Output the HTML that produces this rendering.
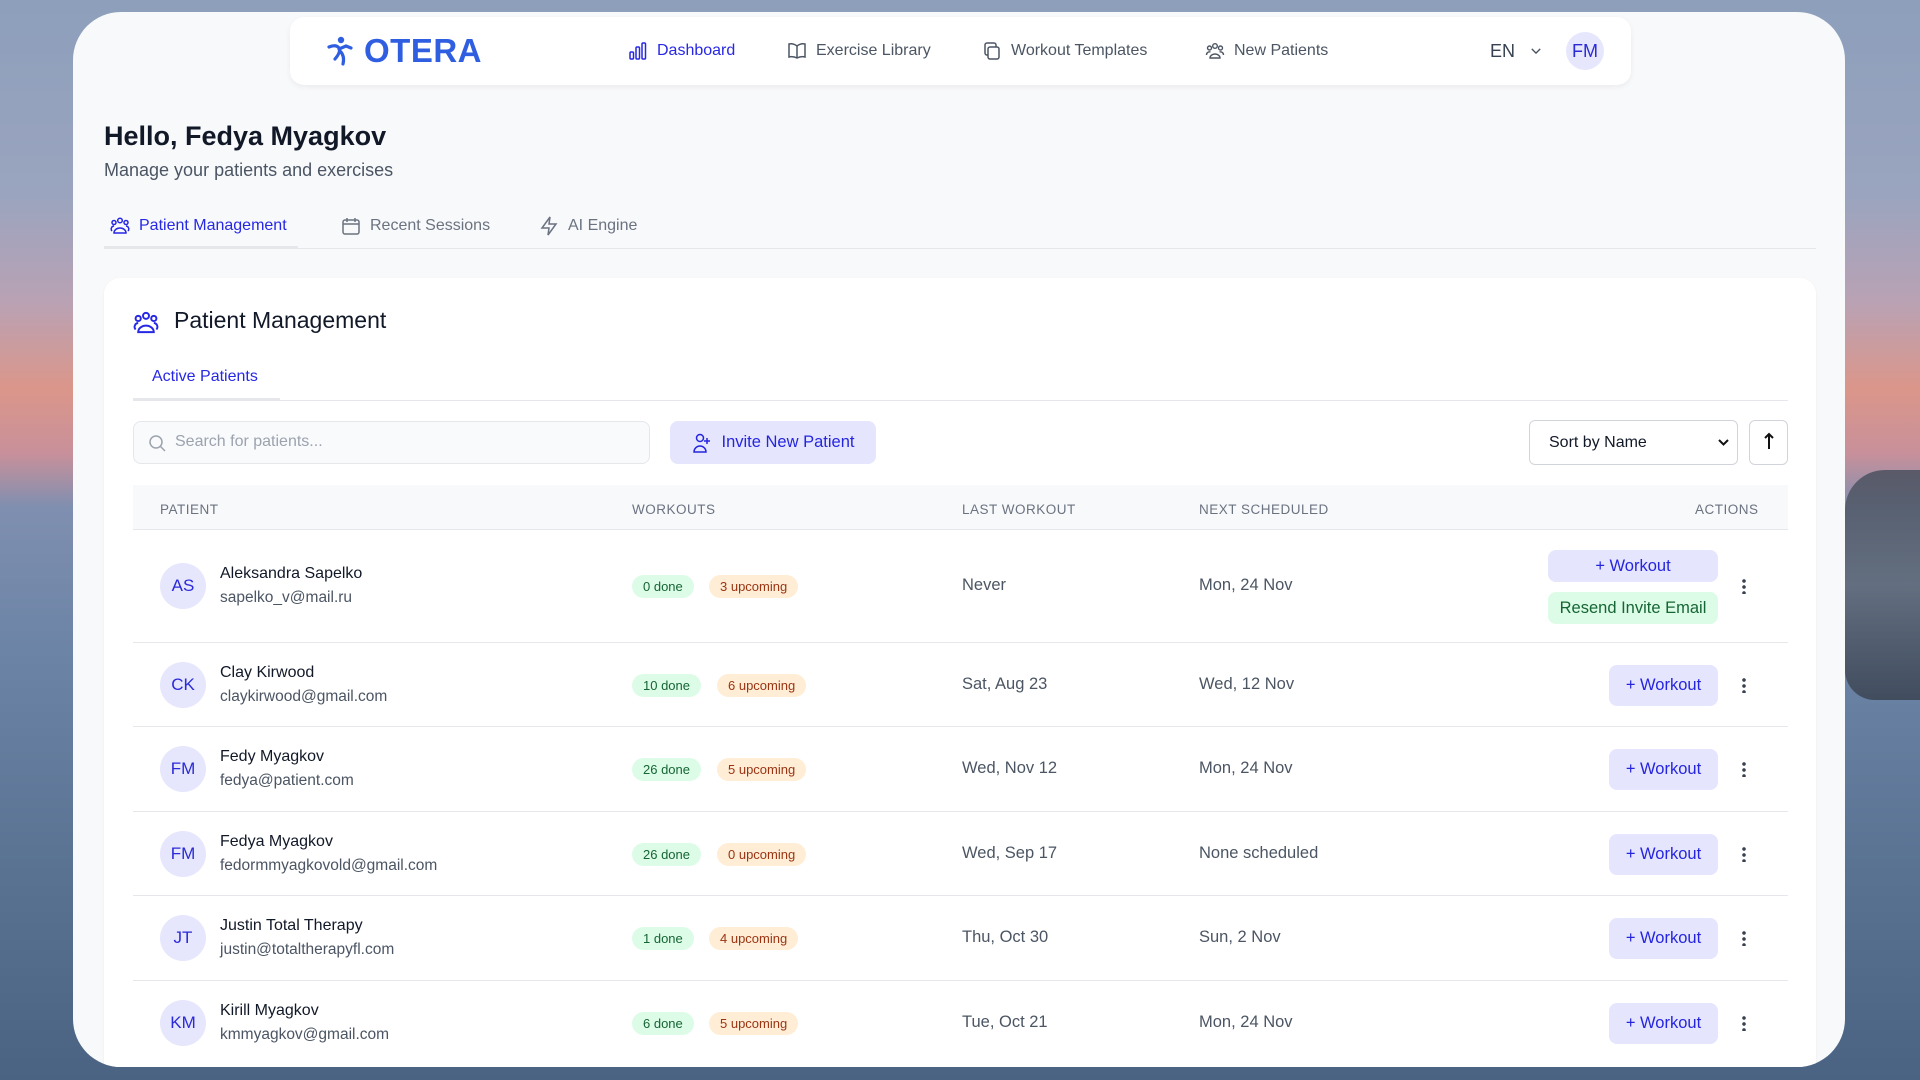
<!DOCTYPE html>
<html><head><meta charset="utf-8"><style>
*{box-sizing:border-box;margin:0;padding:0}
body{width:1920px;height:1080px;overflow:hidden;position:relative;font-family:"Liberation Sans",sans-serif;
background:linear-gradient(180deg,#8d9fbb 0%,#9aa4bf 18%,#b9a2b4 28%,#db968a 36%,#c8909a 42%,#7f8fb0 47%,#6c84a6 60%,#5a7393 80%,#4b6383 100%);}
.rocks{position:absolute;left:1845px;top:470px;width:75px;height:230px;background:linear-gradient(180deg,#4a505e,#606a78 50%,#3a4452);border-radius:40px 0 0 30px;opacity:.85}
.win{position:absolute;left:73px;top:12px;width:1772px;height:1055px;background:#f8f9fb;border-radius:48px;overflow:hidden}
.abs{position:absolute}
.nav{left:217px;top:5px;width:1341px;height:68px;background:#fff;border-radius:14px;box-shadow:0 2px 6px rgba(0,0,0,.06)}
.ni{position:absolute;top:0;height:68px;display:flex;align-items:center;gap:9px;font-size:16px;color:#4b5563}
.ni svg{width:20px;height:20px}
.blue{color:#2727e6}
h1{position:absolute;left:31px;top:109px;font-size:27px;font-weight:bold;color:#111827}
.sub{left:31px;top:148px;font-size:18px;color:#4b5563}
.tab{position:absolute;top:200px;height:28px;display:flex;align-items:center;gap:9px;font-size:16px;color:#6b7280}
.card{left:31px;top:266px;width:1712px;height:820px;background:#fff;border-radius:16px;box-shadow:0 1px 3px rgba(0,0,0,.05)}
.th{position:absolute;top:490px;font-size:13.5px;color:#6b7280;letter-spacing:.5px}
.row{position:absolute;left:60px;width:1655px;border-bottom:1px solid #e5e7eb}
.av{position:absolute;left:87px;width:46px;height:46px;border-radius:50%;background:#e6e6fd;color:#2a2ad8;font-size:17px;display:flex;align-items:center;justify-content:center}
.nm{position:absolute;left:147px;font-size:16px;color:#111827}
.em{position:absolute;left:147px;font-size:15.5px;color:#4b5563}
.bd{position:absolute;height:23px;border-radius:12px;font-size:13px;padding:0 11px;display:flex;align-items:center}
.g{background:#dcfce7;color:#166534}.o{background:#ffedd5;color:#9a3412}
.tx{position:absolute;font-size:16.5px;color:#4b5563}
.wb{position:absolute;left:1536px;width:109px;height:41px;border-radius:8px;background:#e5e5fd;color:#2525e0;font-size:16.5px;display:flex;align-items:center;justify-content:center}
.dots{position:absolute;left:1669px;width:4px;height:16px;background:radial-gradient(circle,#374151 1.6px,transparent 2px) 0 0/4px 6px repeat-y}
</style></head><body>
<div class="rocks"></div>
<div class="win">
 <div class="abs nav">
  <div class="abs" style="left:36px;top:15px;display:flex;align-items:center;gap:10px;color:#2f5fe0">
   <svg width="28" height="32" viewBox="0 0 28 32" fill="none" stroke="#2f5fe0" stroke-width="3.2" stroke-linecap="round"><circle cx="15" cy="5" r="3.2" fill="#2f5fe0" stroke="none"/><path d="M3 12 Q10 9 13 13 Q15 17 9 24 M13 14 L20 11 L25 13 M14 16 Q19 21 17 29"/></svg>
   <span style="font-size:33px;font-weight:bold;letter-spacing:.5px">OTERA</span></div>
  <div class="ni" style="left:338px;color:#2727e6"><svg viewBox="0 0 20 20" fill="none" stroke="#2727e6" stroke-width="1.5"><rect x="2" y="11" width="3.5" height="7" rx="1"/><rect x="8" y="6" width="3.5" height="12" rx="1"/><rect x="14" y="2" width="3.5" height="16" rx="1"/></svg>Dashboard</div>
  <div class="ni" style="left:497px"><svg viewBox="0 0 20 20" fill="none" stroke="#4b5563" stroke-width="1.5"><path d="M10 5 Q6 2 2 3 V16 Q6 15 10 17 Q14 15 18 16 V3 Q14 2 10 5 V17"/></svg>Exercise Library</div>
  <div class="ni" style="left:692px"><svg viewBox="0 0 20 20" fill="none" stroke="#4b5563" stroke-width="1.5"><rect x="6" y="6" width="11" height="12" rx="2"/><path d="M14 6V4a2 2 0 0 0-2-2H5a2 2 0 0 0-2 2v8a2 2 0 0 0 2 2h1"/></svg>Workout Templates</div>
  <div class="ni" style="left:915px"><svg viewBox="0 0 20 20" fill="none" stroke="#4b5563" stroke-width="1.4"><circle cx="10" cy="5" r="2.3"/><circle cx="4.5" cy="7" r="2"/><circle cx="15.5" cy="7" r="2"/><path d="M5 17a5 4 0 0 1 10 0zM1.5 14a3 3 0 0 1 4-3M18.5 14a3 3 0 0 0-4-3"/></svg>New Patients</div>
  <div class="ni" style="left:1200px;font-size:18px;color:#374151;gap:14px">EN<svg viewBox="0 0 20 20" style="width:14px" fill="none" stroke="#4b5563" stroke-width="2"><path d="M4 7l6 6 6-6"/></svg></div>
  <div class="abs" style="left:1276px;top:15px;width:38px;height:38px;border-radius:50%;background:#e6e6fd;color:#2a2ad8;font-size:18px;display:flex;align-items:center;justify-content:center">FM</div>
 </div>
 <h1>Hello, Fedya Myagkov</h1>
 <div class="abs sub">Manage your patients and exercises</div>
 <div class="tab" style="left:37px;color:#2727e6"><svg width="20" height="20" viewBox="0 0 20 20" fill="none" stroke="#2727e6" stroke-width="1.5"><circle cx="10" cy="4.5" r="2.3"/><circle cx="4" cy="6.5" r="2"/><circle cx="16" cy="6.5" r="2"/><path d="M4 17a6 5 0 0 1 12 0zM4 10a3 3 0 0 0-2 5M16 10a3 3 0 0 1 2 5"/></svg>Patient Management</div>
 <div class="tab" style="left:268px"><svg width="20" height="20" viewBox="0 0 20 20" fill="none" stroke="#6b7280" stroke-width="1.5"><rect x="2" y="4" width="16" height="14" rx="2"/><path d="M2 8h16M6 2v4M14 2v4"/></svg>Recent Sessions</div>
 <div class="tab" style="left:466px"><svg width="20" height="20" viewBox="0 0 20 20" fill="none" stroke="#6b7280" stroke-width="1.5"><path d="M11 1L3 12h7l-1 7 8-11h-7z"/></svg>AI Engine</div>
 <div class="abs" style="left:31px;top:236px;width:1712px;height:1px;background:#e5e7eb"></div>
 <div class="abs" style="left:31px;top:234px;width:194px;height:3px;background:#e5e7eb"></div>
 <div class="abs card"></div>
 <svg class="abs" style="left:60px;top:298px" width="26" height="26" viewBox="0 0 20 20" fill="none" stroke="#2727e6" stroke-width="1.5"><circle cx="10" cy="4.5" r="2.3"/><circle cx="4" cy="6.5" r="2"/><circle cx="16" cy="6.5" r="2"/><path d="M4 17a6 5 0 0 1 12 0zM4 10a3 3 0 0 0-2 5M16 10a3 3 0 0 1 2 5"/></svg>
 <div class="abs" style="left:101px;top:295px;font-size:23px;color:#111827">Patient Management</div>
 <div class="abs blue" style="left:79px;top:356px;font-size:16px">Active Patients</div>
 <div class="abs" style="left:60px;top:388px;width:1655px;height:1px;background:#e5e7eb"></div>
 <div class="abs" style="left:60px;top:386px;width:147px;height:3px;background:#e5e7eb"></div>
 <div class="abs" style="left:60px;top:409px;width:517px;height:43px;border:1px solid #e5e7eb;border-radius:8px;background:#f9fafb"></div>
 <svg class="abs" style="left:74px;top:421px" width="20" height="20" viewBox="0 0 20 20" fill="none" stroke="#9ca3af" stroke-width="1.5"><circle cx="9" cy="9" r="6"/><path d="M13.5 13.5L18 18"/></svg>
 <div class="abs" style="left:102px;top:421px;font-size:16px;color:#9ca3af">Search for patients...</div>
 <div class="abs" style="left:597px;top:409px;width:206px;height:43px;border-radius:8px;background:#e5e5fd;color:#2525e0;font-size:16.5px;display:flex;align-items:center;justify-content:center;gap:10px"><svg width="20" height="22" viewBox="0 0 20 22" fill="none" stroke="#2525e0" stroke-width="1.5"><circle cx="8" cy="6" r="3.5"/><path d="M2 20a6 6 0 0 1 12 0zM15 6v6M12 9h6"/></svg>Invite New Patient</div>
 <div class="abs" style="left:1456px;top:408px;width:209px;height:45px;border:1px solid #d1d5db;border-radius:6px;background:#fff;font-size:16px;color:#111827;padding:13px 19px">Sort by Name<svg style="position:absolute;right:8px;top:17px" width="11" height="9" viewBox="0 0 11 9" fill="none" stroke="#111" stroke-width="2"><path d="M1 2l4.5 4.5L10 2"/></svg></div>
 <div class="abs" style="left:1676px;top:408px;width:39px;height:45px;border:1px solid #d1d5db;border-radius:6px;background:#fff"><svg style="position:absolute;left:13px;top:11px" width="12" height="18" viewBox="0 0 12 18" fill="none" stroke="#111" stroke-width="2"><path d="M6 17V2M2 6l4-4 4 4"/></svg></div>
 <div class="abs" style="left:60px;top:473px;width:1655px;height:45px;background:#f8f9fb;border-bottom:1px solid #e5e7eb"></div>
 <div class="th" style="left:87px">PATIENT</div>
 <div class="th" style="left:559px">WORKOUTS</div>
 <div class="th" style="left:889px">LAST WORKOUT</div>
 <div class="th" style="left:1126px">NEXT SCHEDULED</div>
 <div class="th" style="left:1622px">ACTIONS</div>

 <div class="row" style="top:518px;height:113px"></div>
 <div class="row" style="top:631px;height:84px"></div>
 <div class="row" style="top:715px;height:85px"></div>
 <div class="row" style="top:800px;height:84px"></div>
 <div class="row" style="top:884px;height:85px"></div>

 <div class="av" style="top:551px">AS</div><div class="nm" style="top:553px">Aleksandra Sapelko</div><div class="em" style="top:577px">sapelko_v@mail.ru</div>
 <div class="bd g" style="left:559px;top:563px">0 done</div><div class="bd o" style="left:636px;top:563px">3 upcoming</div>
 <div class="tx" style="left:889px;top:564px">Never</div><div class="tx" style="left:1126px;top:564px">Mon, 24 Nov</div>
 <div class="wb" style="left:1475px;width:170px;height:32px;top:538px">+ Workout</div>
 <div class="wb" style="left:1475px;width:170px;height:32px;top:580px;background:#dcfce7;color:#166534">Resend Invite Email</div>
 <div class="dots" style="top:566px"></div>

 <div class="av" style="top:650px">CK</div><div class="nm" style="top:652px">Clay Kirwood</div><div class="em" style="top:676px">claykirwood@gmail.com</div>
 <div class="bd g" style="left:559px;top:662px">10 done</div><div class="bd o" style="left:644px;top:662px">6 upcoming</div>
 <div class="tx" style="left:889px;top:663px">Sat, Aug 23</div><div class="tx" style="left:1126px;top:663px">Wed, 12 Nov</div>
 <div class="wb" style="top:653px">+ Workout</div><div class="dots" style="top:665px"></div>

 <div class="av" style="top:734px">FM</div><div class="nm" style="top:736px">Fedy Myagkov</div><div class="em" style="top:760px">fedya@patient.com</div>
 <div class="bd g" style="left:559px;top:746px">26 done</div><div class="bd o" style="left:644px;top:746px">5 upcoming</div>
 <div class="tx" style="left:889px;top:747px">Wed, Nov 12</div><div class="tx" style="left:1126px;top:747px">Mon, 24 Nov</div>
 <div class="wb" style="top:737px">+ Workout</div><div class="dots" style="top:749px"></div>

 <div class="av" style="top:819px">FM</div><div class="nm" style="top:821px">Fedya Myagkov</div><div class="em" style="top:845px">fedormmyagkovold@gmail.com</div>
 <div class="bd g" style="left:559px;top:831px">26 done</div><div class="bd o" style="left:644px;top:831px">0 upcoming</div>
 <div class="tx" style="left:889px;top:832px">Wed, Sep 17</div><div class="tx" style="left:1126px;top:832px">None scheduled</div>
 <div class="wb" style="top:822px">+ Workout</div><div class="dots" style="top:834px"></div>

 <div class="av" style="top:903px">JT</div><div class="nm" style="top:905px">Justin Total Therapy</div><div class="em" style="top:929px">justin@totaltherapyfl.com</div>
 <div class="bd g" style="left:559px;top:915px">1 done</div><div class="bd o" style="left:636px;top:915px">4 upcoming</div>
 <div class="tx" style="left:889px;top:916px">Thu, Oct 30</div><div class="tx" style="left:1126px;top:916px">Sun, 2 Nov</div>
 <div class="wb" style="top:906px">+ Workout</div><div class="dots" style="top:918px"></div>

 <div class="av" style="top:988px">KM</div><div class="nm" style="top:990px">Kirill Myagkov</div><div class="em" style="top:1014px">kmmyagkov@gmail.com</div>
 <div class="bd g" style="left:559px;top:1000px">6 done</div><div class="bd o" style="left:636px;top:1000px">5 upcoming</div>
 <div class="tx" style="left:889px;top:1001px">Tue, Oct 21</div><div class="tx" style="left:1126px;top:1001px">Mon, 24 Nov</div>
 <div class="wb" style="top:991px">+ Workout</div><div class="dots" style="top:1003px"></div>
</div>
</body></html>
